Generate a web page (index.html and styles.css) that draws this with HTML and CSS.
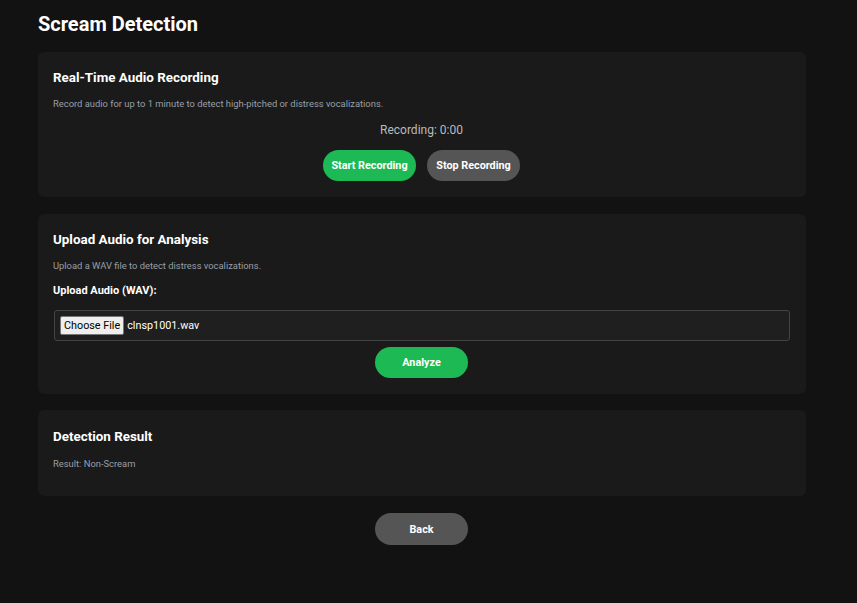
FILE: index.html
```html
<!DOCTYPE html>
<html>
<head>
<meta charset="utf-8">
<link rel="stylesheet" href="styles.css">
</head>
<body>
<div class="page">
  <h1 class="title">Scream Detection</h1>
  <section class="card">
    <h2 class="card-title">Real-Time Audio Recording</h2>
    <p class="desc">Record audio for up to 1 minute to detect high-pitched or distress vocalizations.</p>
    <div class="status">Recording: 0:00</div>
    <div class="btn-row">
      <button class="btn btn-green">Start Recording</button>
      <button class="btn btn-gray">Stop Recording</button>
    </div>
  </section>
  <section class="card card-upload">
    <h2 class="card-title">Upload Audio for Analysis</h2>
    <p class="desc">Upload a WAV file to detect distress vocalizations.</p>
    <div class="label">Upload Audio (WAV):</div>
    <div class="file-box">
      <span class="file-btn">Choose File</span>
      <span class="file-name">clnsp1001.wav</span>
    </div>
    <div class="btn-row btn-row-tight">
      <button class="btn btn-green">Analyze</button>
    </div>
  </section>
  <section class="card card-result">
    <h2 class="card-title">Detection Result</h2>
    <p class="desc desc-last">Result: Non-Scream</p>
  </section>
  <div class="btn-row back-row">
    <button class="btn btn-gray">Back</button>
  </div>
</div>
</body>
</html>
```
FILE: styles.css
```css
html, body {
  margin: 0;
  padding: 0;
  background: #121212;
  font-family: Roboto, "Liberation Sans", Arial, sans-serif;
  color: #ffffff;
}
.page {
  width: 768px;
  margin-left: 38px;
  padding-top: 10px;
}
.title {
  margin: 0 0 14px 0;
  font-size: 20px;
  line-height: 28px;
  font-weight: 700;
}
.card {
  background: #1a1a1a;
  border-radius: 6px;
  padding: 16px 16px 16px 15px;
  margin-bottom: 17px;
}
.card-upload {
  margin-bottom: 16px;
}
.card-result {
  padding-top: 17px;
  padding-bottom: 15px;
}
.card-result .card-title {
  margin-bottom: 10px;
}
.card-title {
  margin: 0 0 9px 0;
  font-size: 13.4px;
  line-height: 20px;
  font-weight: 700;
}
.desc {
  margin: 0 0 10px 0;
  font-size: 9.4px;
  line-height: 14px;
  color: #9a9fa6;
}
.desc-last {
  margin-bottom: 10px;
}
.status {
  text-align: center;
  font-size: 12px;
  line-height: 18px;
  color: #bbbbbb;
  margin-bottom: 11px;
}
.btn-row {
  display: flex;
  justify-content: center;
  gap: 11px;
}
.btn-row-tight {
  margin-top: 6px;
}
.back-row {
  padding-right: 1px;
}
.btn {
  width: 93px;
  height: 31px;
  border: none;
  border-radius: 16px;
  color: #ffffff;
  font-family: Roboto, "Liberation Sans", Arial, sans-serif;
  font-size: 10.8px;
  font-weight: 700;
  padding: 0;
}
.btn-green { background: #1db954; }
.btn-gray { background: #555555; }
.back-row .btn { height: 32px; }
.label {
  font-size: 11px;
  line-height: 16px;
  font-weight: 700;
  margin-bottom: 11px;
}
.file-box {
  height: 31px;
  box-sizing: border-box;
  border: 1px solid #444444;
  border-radius: 3px;
  background: #1f1f1f;
  display: flex;
  align-items: center;
  padding-left: 5px;
  margin-left: 1px;
}
.file-btn {
  display: inline-flex;
  align-items: center;
  height: 19px;
  box-sizing: border-box;
  padding: 0 3px;
  background: #efefef;
  border: 1px solid #767676;
  border-radius: 2px;
  color: #000000;
  font-size: 10.8px;
}
.file-name {
  margin-left: 3px;
  font-size: 10.8px;
  color: #ffffff;
}
```
